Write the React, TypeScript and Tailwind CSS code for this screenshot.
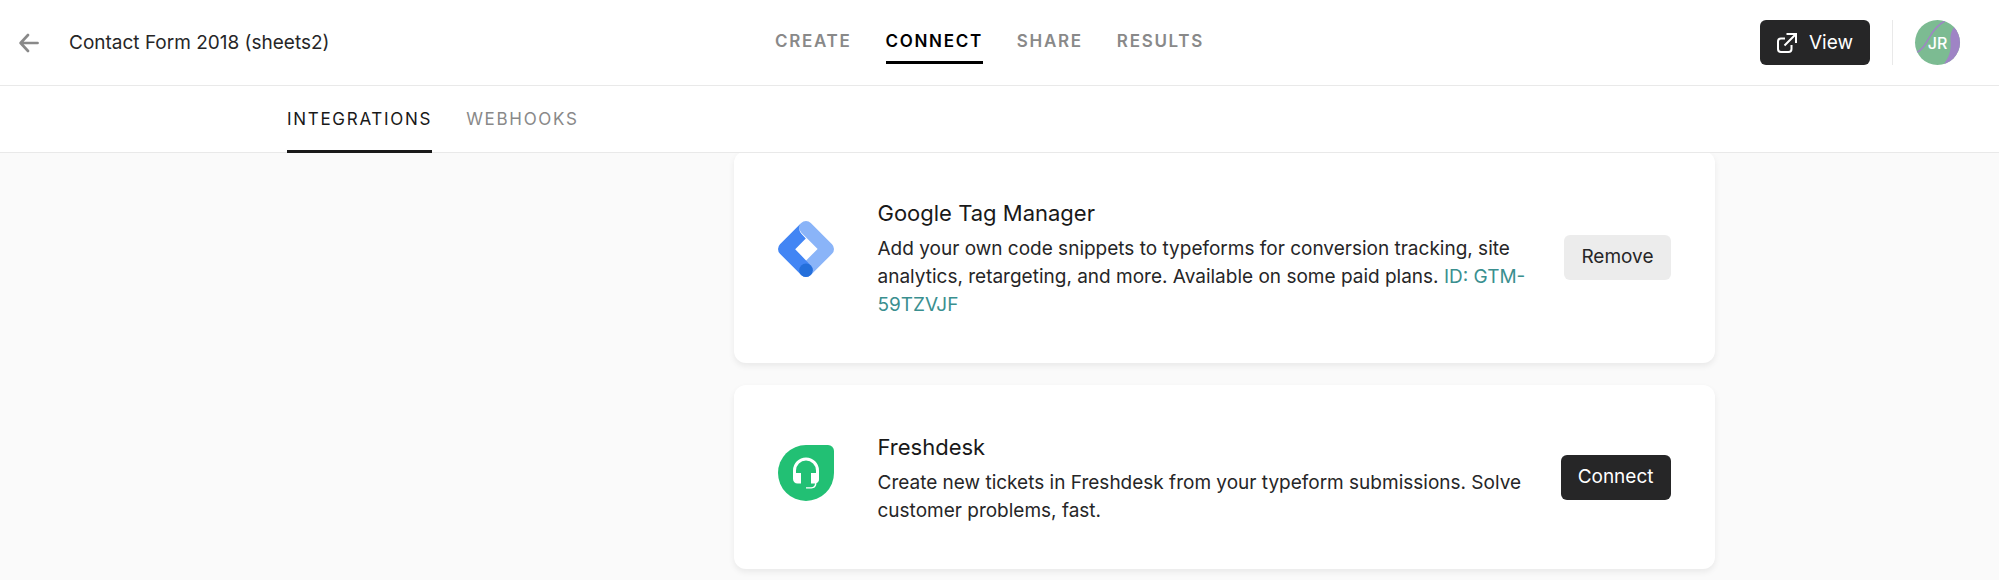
import type { ReactNode } from "react";
import clsx from "clsx";

const mainTabs = ["Create", "Connect", "Share", "Results"];

const subTabs = ["Integrations", "Webhooks"];

const BackArrow = () => (
  <svg className="h-5 w-5" viewBox="0 0 20 20" fill="none" stroke="currentColor" strokeWidth="2.6" strokeLinecap="round" strokeLinejoin="round">
    <path d="M9 2 1.6 10 9 18M2 10h16.6" />
  </svg>
);

const ExternalIcon = () => (
  <svg className="h-5 w-5" viewBox="0 0 20 20" fill="none" stroke="currentColor" strokeWidth="2">
    <path d="M8 5.5H4a3 3 0 0 0-3 3V16a3 3 0 0 0 3 3h7.5a3 3 0 0 0 3-3v-4" />
    <path d="M9.5 1H19v9M19 1 7.5 12.5" />
  </svg>
);

const TagManagerLogo = () => (
  <svg className="h-14 w-14" viewBox="0 0 56 56">
    <path d="M28 6.8 49.2 28 28 49.2" fill="none" stroke="#8ab4f8" strokeWidth="13.6" strokeLinejoin="round" strokeLinecap="round" />
    <path d="M23.2 2 2 23.2a6.8 6.8 0 0 0 0 9.6L23.2 54a6.8 6.8 0 0 0 9.6-9.6L17.2 28.2l10.6-10.8-4.4-4.6c-2.8-2.8-2.8-7.8-.2-10.8Z" fill="#4285f4" />
    <circle cx="28" cy="49.2" r="6.8" fill="#246fdb" />
  </svg>
);

const FreshdeskLogo = () => (
  <svg className="h-14 w-14" viewBox="0 0 56 56">
    <path d="M28 0h22a6 6 0 0 1 6 6v22A28 28 0 1 1 28 0Z" fill="#22c074" />
    <path d="M28 12.5A13 13 0 0 0 15 25.5V34a4.5 4.5 0 0 0 4.5 4.5H23V28h-5v-2.5a10 10 0 0 1 20 0V28h-5v10.5h4c0 2.4-1.6 3.7-4 3.7h-5v1.3h5.5c3 0 4.9-2 4.9-5.2A4.5 4.5 0 0 0 41 34v-8.5A13 13 0 0 0 28 12.5Z" fill="#fff" />
  </svg>
);

type Integration = {
  name: string;
  description: string;
  trackingId?: string;
  logo: ReactNode;
  logoClass: string;
  connected: boolean;
};

const integrations: Integration[] = [
  {
    name: "Google Tag Manager",
    description:
      "Add your own code snippets to typeforms for conversion tracking, site analytics, retargeting, and more. Available on some paid plans.",
    trackingId: "ID: GTM-59TZVJF",
    logo: <TagManagerLogo />,
    logoClass: "pb-4",
    connected: true,
  },
  {
    name: "Freshdesk",
    description: "Create new tickets in Freshdesk from your typeform submissions. Solve customer problems, fast.",
    logo: <FreshdeskLogo />,
    logoClass: "pb-2",
    connected: false,
  },
];

const IntegrationCard = ({ item }: { item: Integration }) => (
  <article className="flex items-center rounded-xl bg-white px-11 py-11 shadow-[0_3px_6px_rgba(0,0,0,0.07)]">
    <div className={clsx("mr-11 shrink-0", item.logoClass)}>{item.logo}</div>
    <div className="min-w-0 flex-1 pr-7">
      <h2 className="mb-1 text-[22px] leading-9 text-[#191919]">{item.name}</h2>
      <p className="text-[19px] leading-7 text-[#262627]">
        {item.description}
        {item.trackingId && (
          <>
            {" "}
            <a href="#gtm" className="text-[#3a8f8f]">{item.trackingId}</a>
          </>
        )}
      </p>
    </div>
    <button
      type="button"
      className={clsx(
        "h-[45px] shrink-0 rounded-md px-[17px] text-[19px]",
        item.connected ? "bg-[#ececec] text-[#262627]" : "bg-[#262627] text-white"
      )}
    >
      {item.connected ? "Remove" : "Connect"}
    </button>
  </article>
);

export default function App() {
  return (
    <div className="min-h-screen bg-[#fafafa] font-['Inter',sans-serif] text-[#262627]">
      <div className="relative z-10 bg-white">
        <header className="flex h-[86px] items-center border-b border-[#e9e9e9] pr-[39px] pl-[19px]">
          <div className="flex flex-1 items-center gap-[30px]">
            <a href="#workspace" aria-label="Back" className="text-[#898989]">
              <BackArrow />
            </a>
            <h1 className="text-[19px] leading-[30px]">Contact Form 2018 (sheets2)</h1>
          </div>
          <nav className="flex gap-[34px]">
            {mainTabs.map((tab) => (
              <a
                key={tab}
                href={`#${tab.toLowerCase()}`}
                className={clsx(
                  "border-b-3 pt-2 pb-2 text-[17px] leading-6 font-semibold tracking-widest uppercase",
                  tab === "Connect" ? "border-black text-black" : "border-transparent text-[#898989]"
                )}
              >
                {tab}
              </a>
            ))}
          </nav>
          <div className="flex flex-1 items-center justify-end">
            <button type="button" className="flex h-[45px] items-center gap-3 rounded-md bg-[#262627] px-[17px] text-[19px] leading-[30px] text-white">
              <ExternalIcon />
              View
            </button>
            <div className="mx-[22px] h-[45px] w-px bg-[#e9e9e9]" />
            <button type="button" aria-label="Account" className="relative h-[45px] w-[45px] overflow-hidden rounded-full bg-[#7cbb92]">
              <svg className="h-[45px] w-[45px]" viewBox="0 0 45 45">
                <path d="M40 5c-3 6-5 8-4.5 16s0 15-8 25H46V5Z" fill="#9f84c5" />
                <path d="M1 33c7-4 9-8 13-15S22 5 30 1" fill="none" stroke="#9f84c5" strokeWidth="1.5" />
              </svg>
              <span className="absolute inset-0 flex items-center justify-center text-base font-medium text-white">JR</span>
            </button>
          </div>
        </header>
        <div className="h-[67px] border-b border-[#e9e9e9]">
          <nav className="mx-auto flex h-[67px] max-w-[1425px] gap-[34px]">
            {subTabs.map((tab) => (
              <a
                key={tab}
                href={`#${tab.toLowerCase()}`}
                className={clsx(
                  "flex items-center border-b-3 pt-1 text-[17px] tracking-widest uppercase",
                  tab === "Integrations" ? "border-[#191919] text-[#191919]" : "border-transparent text-[#898989]"
                )}
              >
                {tab}
              </a>
            ))}
          </nav>
        </div>
      </div>
      <main className="mx-auto -mt-0.5 flex max-w-[1430px] justify-end">
        <section className="flex w-[981px] flex-col gap-[22px] pb-3">
          {integrations.map((item) => (
            <IntegrationCard key={item.name} item={item} />
          ))}
        </section>
      </main>
    </div>
  );
}
